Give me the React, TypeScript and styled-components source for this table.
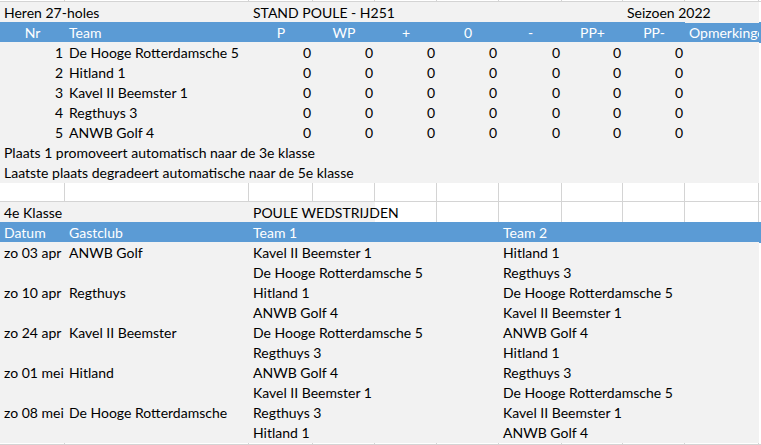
import React from "react";
import styled, { createGlobalStyle, css } from "styled-components";

const GlobalStyle = createGlobalStyle`
  html, body { margin: 0; padding: 0; background: #ffffff; }
  body { font-family: Lato, "Open Sans", sans-serif; overflow: hidden; }
`;

const COLS = "65px 184px 64px 62px 62px 62px 63px 61px 62px 74px 2px";
const GRID = "#d4d4d4";
const GRAY = "#f2f2f2";
const BLUE = "#5b9bd5";

const Sheet = styled.div`
  width: 761px;
  height: 445px;
  overflow: hidden;
  display: flex;
  flex-direction: column;
`;

const Row = styled.div<{ $h?: number }>`
  display: grid;
  grid-template-columns: ${COLS};
  height: ${(p) => p.$h ?? 20}px;
  flex: none;
`;

type Fill = "gray" | "blue" | "white";

const Cell = styled.div<{
  $fill?: Fill;
  $align?: "left" | "right" | "center";
  $span?: number;
  $clip?: boolean;
}>`
  position: relative;
  box-sizing: border-box;
  grid-column: span ${(p) => p.$span ?? 1};
  height: 100%;
  padding: 0 3px 0 4px;
  font-size: 14px;
  line-height: 21px;
  white-space: nowrap;
  color: #000;
  text-align: ${(p) => p.$align ?? "left"};
  overflow: ${(p) => (p.$clip ? "hidden" : "visible")};
  z-index: ${(p) => (p.$clip ? 0 : 1)};
  ${(p) =>
    p.$fill === "blue"
      ? css`
          background: ${BLUE};
          color: #ffffff;
        `
      : p.$fill === "white"
      ? css`
          background: #ffffff;
          border-right: 1px solid ${GRID};
          border-bottom: 1px solid ${GRID};
          z-index: 0;
        `
      : css`
          background: ${GRAY};
        `}
`;

const HeadCell = styled(Cell)`
  padding: 0 2px;
`;

const ScoreCell = styled(Cell)`
  text-align: right;
  padding-right: 2px;
`;

const teams = [
  "De Hooge Rotterdamsche 5",
  "Hitland 1",
  "Kavel II Beemster 1",
  "Regthuys 3",
  "ANWB Golf 4",
];

const matches: [string, string, string, string][] = [
  ["zo 03 apr", "ANWB Golf", "Kavel II Beemster 1", "Hitland 1"],
  ["", "", "De Hooge Rotterdamsche 5", "Regthuys 3"],
  ["zo 10 apr", "Regthuys", "Hitland 1", "De Hooge Rotterdamsche 5"],
  ["", "", "ANWB Golf 4", "Kavel II Beemster 1"],
  ["zo 24 apr", "Kavel II Beemster", "De Hooge Rotterdamsche 5", "ANWB Golf 4"],
  ["", "", "Regthuys 3", "Hitland 1"],
  ["zo 01 mei", "Hitland", "ANWB Golf 4", "Regthuys 3"],
  ["", "", "Kavel II Beemster 1", "De Hooge Rotterdamsche 5"],
  ["zo 08 mei", "De Hooge Rotterdamsche", "Regthuys 3", "Kavel II Beemster 1"],
  ["", "", "Hitland 1", "ANWB Golf 4"],
];

const WhiteRow: React.FC<{ h?: number }> = ({ h }) => (
  <Row $h={h}>
    {Array.from({ length: 11 }).map((_, i) => (
      <Cell key={i} $fill="white" />
    ))}
  </Row>
);

const EdgeCell: React.FC = () => <Cell $fill="white" />;

export default function App() {
  return (
    <>
      <GlobalStyle />
      <Sheet>
        <WhiteRow h={2} />
        <Row>
          <Cell $span={2}>Heren 27-holes</Cell>
          <Cell $span={6}>STAND POULE - H251</Cell>
          <Cell $span={2}>Seizoen 2022</Cell>
          <EdgeCell />
        </Row>
        <Row>
          <HeadCell $fill="blue" $align="center">Nr</HeadCell>
          <Cell $fill="blue">Team</Cell>
          {["P", "WP", "+", "0", "-", "PP+", "PP-"].map((h) => (
            <HeadCell key={h} $fill="blue" $align="center">
              {h}
            </HeadCell>
          ))}
          <Cell $fill="blue" $clip>
            Opmerkingen
          </Cell>
          <Cell $fill="blue" />
        </Row>
        {teams.map((t, i) => (
          <Row key={t}>
            <ScoreCell>{i + 1}</ScoreCell>
            <Cell>{t}</Cell>
            {Array.from({ length: 7 }).map((_, j) => (
              <ScoreCell key={j}>0</ScoreCell>
            ))}
            <Cell />
            <EdgeCell />
          </Row>
        ))}
        <Row>
          <Cell $span={10}>Plaats 1 promoveert automatisch naar de 3e klasse</Cell>
          <EdgeCell />
        </Row>
        <Row>
          <Cell $span={10}>
            Laatste plaats degradeert automatische naar de 5e klasse
          </Cell>
          <EdgeCell />
        </Row>
        <WhiteRow />
        <Row>
          <Cell $span={2}>4e Klasse</Cell>
          <Cell $span={2}>POULE WEDSTRIJDEN</Cell>
          {Array.from({ length: 7 }).map((_, i) => (
            <Cell key={i} $fill="white" />
          ))}
        </Row>
        <Row>
          <Cell $fill="blue">Datum</Cell>
          <Cell $fill="blue">Gastclub</Cell>
          <Cell $fill="blue" $span={4}>
            Team 1
          </Cell>
          <Cell $fill="blue" $span={5}>
            Team 2
          </Cell>
        </Row>
        {matches.map(([d, g, t1, t2], i) => (
          <Row key={i}>
            <Cell>{d}</Cell>
            <Cell>{g}</Cell>
            <Cell $span={4}>{t1}</Cell>
            <Cell $span={4}>{t2}</Cell>
            <EdgeCell />
          </Row>
        ))}
        <WhiteRow h={3} />
      </Sheet>
    </>
  );
}
